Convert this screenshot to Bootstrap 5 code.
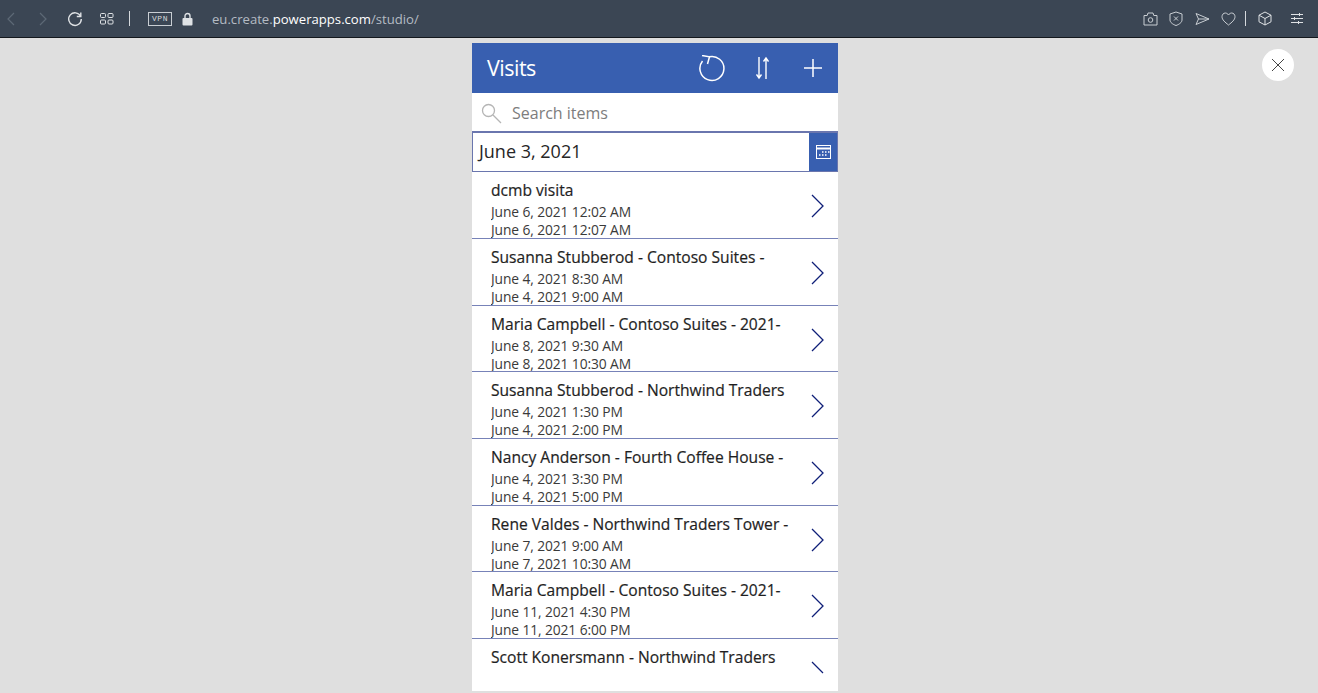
<!DOCTYPE html>
<html lang="en">
<head>
  <meta charset="UTF-8">
  <title>Visits</title>
  <link href="https://cdn.jsdelivr.net/npm/bootstrap@5.3.0/dist/css/bootstrap.min.css" rel="stylesheet">
  <style>
    html, body { height: 693px; overflow: hidden; }
    body { background: #dfdfdf; font-family: "Open Sans", sans-serif; color: #1c1c1c; }
    svg { display: block; flex: none; }
    .browser-bar { height: 38px; background: #3b4654; border-bottom: 1px solid #14181d; padding: 0 14px 0 5px; }
    .bar-sep { width: 1px; height: 15px; background: #d5d9dd; }
    .vpn-tag { width: 24px; height: 14px; border: 1px solid #c9ced3; font: 8px/12px "Liberation Mono", monospace; letter-spacing: 0.6px; color: #d5d9dd; text-align: center; }
    .url-text { font: 13.13px "Open Sans", sans-serif; color: #b4bbc3; margin-left: 19px; }
    .url-text b { color: #fff; font-weight: 400; }
    .stage { position: relative; height: 655px; padding: 5px 8px 0 0; }
    .close-btn { position: absolute; top: 11px; right: 24px; width: 32px; height: 32px; border-radius: 50%; background: #fff; }
    .phone { width: 366px; height: 648px; background: #fff; overflow: hidden; }
    .app-head { height: 50px; background: #385fb0; color: #fff; padding: 0 15px 0 15px; }
    .app-title { font-size: 21.5px; letter-spacing: -0.5px; }
    .search-row { height: 38px; padding: 2px 0 0 9px; font-size: 16px; color: #7d7d7d; gap: 10px; }
    .date-row { height: 41.4px; border: 1px solid #6a76ae; border-top-width: 2px; }
    .date-text { font-size: 18px; padding: 0 0 2px 6px; color: #262626; }
    .date-btn { width: 28px; background: #385fb0; }
    .app-head, .search-row, .date-row, .visit-row { flex-shrink: 0; }
    .visit-row { height: 66.67px; border-bottom: 1px solid #7782b8; padding: 8px 13px 0 19px; overflow: hidden; }
    .visit-row:last-child { border-bottom: 0; }
    .visit-body { width: 304px; overflow: hidden; white-space: nowrap; }
    .visit-title { font-size: 15.6px; font-weight: 500; line-height: 20px; margin-bottom: 3px; color: #1f1f1f; -webkit-text-stroke: 0.2px #1f1f1f; }
    .visit-time { font-size: 13.8px; line-height: 18px; color: #3a3a3a; letter-spacing: -0.1px; }
    .chev-box { margin-top: 14px; }
  </style>
</head>
<body>

  <div class="browser-bar d-flex align-items-center">
    <svg width="12" height="14" viewBox="0 0 12 14" fill="none" stroke="#5d6976" stroke-width="1.2"><path d="M9 1 3 7l6 6"/></svg>
    <svg style="margin-left:20px" width="12" height="14" viewBox="0 0 12 14" fill="none" stroke="#5d6976" stroke-width="1.2"><path d="m3 1 6 6-6 6"/></svg>
    <svg style="margin-left:18px" width="16" height="16" viewBox="0 0 16 16" fill="none" stroke="#dfe2e5" stroke-width="1.4"><path d="M13.6 5.2A6.3 6.3 0 1 0 14.3 8"/><path d="M13.800 1.500v4h-4"/></svg>
    <svg style="margin-left:17px" width="14" height="12" viewBox="0 0 14 12" fill="none" stroke="#dfe2e5"><rect x=".5" y=".5" width="5" height="4" rx="1"/><rect x="8" y=".5" width="5" height="4" rx="1"/><rect x=".5" y="7" width="5" height="4" rx="1"/><rect x="8" y="7" width="5" height="4" rx="1"/></svg>
    <div class="bar-sep" style="margin-left:15px"></div>
    <div class="vpn-tag" style="margin-left:18px">VPN</div>
    <svg style="margin-left:10px" width="11" height="14" viewBox="0 0 11 14"><path d="M3 6V4a2.500 2.500 0 0 1 5 0v2" fill="none" stroke="#dfe2e5" stroke-width="1.4"/><rect x=".5" y="6" width="10" height="7.500" rx="1" fill="#dfe2e5"/></svg>
    <div class="url-text">eu.create.<b>powerapps.com</b>/studio/</div>

    <div class="d-flex align-items-center ms-auto">
      <svg width="15" height="14" viewBox="0 0 15 14" fill="none" stroke="#c9ced3"><path d="M1 3.500h3.200L5 1h5l.8 2.500H14v9.500H1z"/><circle cx="7.500" cy="8" r="2.300"/></svg>
      <svg style="margin-left:11px" width="14" height="15" viewBox="0 0 14 15" fill="none" stroke="#c9ced3"><path d="M7 1 13 3v6c0 2.500-3 4.500-6 5.500C4 13.500 1 11.500 1 9V3z"/><path d="m5 5.500 4 4m0-4-4 4"/></svg>
      <svg style="margin-left:12px" width="15" height="14" viewBox="0 0 15 14" fill="none" stroke="#c9ced3"><path d="M1 1.500 14 7 1 12.500 3.500 7zM3.500 7H14"/></svg>
      <svg style="margin-left:11px" width="15" height="14" viewBox="0 0 15 14" fill="none" stroke="#c9ced3"><path d="M7.500 13C4 10.200 1 7.800 1 4.700 1 2.600 2.500 1 4.300 1c1.300 0 2.500.8 3.200 2 .7-1.200 1.900-2 3.200-2C12.500 1 14 2.600 14 4.700c0 3.100-3 5.500-6.500 8.300z"/></svg>
      <div class="bar-sep" style="margin-left:9px"></div>
      <svg style="margin-left:12px" width="14" height="15" viewBox="0 0 14 15" fill="none" stroke="#dfe2e5"><path d="M7 1 13 4.200v6.600L7 14 1 10.800V4.200zM1 4.200 7 7.500l6-3.300M7 7.500V14"/></svg>
      <svg style="margin-left:18px" width="14" height="13" viewBox="0 0 14 13" fill="none" stroke="#dfe2e5"><path d="M1 2.500h12M1 6.500h12M1 10.500h12"/><path d="M9.500 1v3M4.500 5v3M8.500 9v3"/></svg>
    </div>
  </div>

  <div class="stage d-flex justify-content-center">
    <div class="close-btn d-flex align-items-center justify-content-center">
      <svg width="14" height="14" viewBox="0 0 14 14" fill="none" stroke="#444" stroke-width="1"><path d="m1 1 12 12M13 1 1 13"/></svg>
    </div>

    <div class="phone d-flex flex-column">
      <div class="app-head d-flex align-items-center">
        <div class="app-title me-auto">Visits</div>
        <svg width="26" height="27" viewBox="0 0 26 27" fill="none" stroke="#fff" stroke-width="1.5"><path d="M10 1.800A12 12 0 1 1 3.500 6"/><path d="M3 .5 10.500 1.800 8.500 9"/></svg>
        <svg style="margin-left:31px" width="13" height="24" viewBox="0 0 13 24" fill="none" stroke="#fff" stroke-width="1.400"><path d="M3 1v21M.5 18.500 3 22l2.500-3.500"/><path d="M10 23V2M7.500 5.500 10 2l2.500 3.500"/></svg>
        <svg style="margin-left:34px" width="20" height="20" viewBox="0 0 20 20" fill="none" stroke="#fff" stroke-width="1.500"><path d="M10 1v18M1 10h18"/></svg>
      </div>

      <div class="search-row d-flex align-items-center">
        <svg width="21" height="21" viewBox="0 0 21 21" fill="none" stroke="#b5b5b5" stroke-width="1.300"><circle cx="7.500" cy="7.500" r="6"/><path d="m12 12 8 8"/></svg>
        <span>Search items</span>
      </div>

      <div class="date-row d-flex">
        <div class="date-text flex-grow-1 d-flex align-items-center">June 3, 2021</div>
        <div class="date-btn d-flex align-items-center justify-content-center">
          <svg width="15" height="14" viewBox="0 0 15 14" fill="none" stroke="#fff"><rect x=".5" y=".5" width="14" height="13"/><path d="M.5 3.500h14" stroke-width="2"/><path d="M6 7h1.500M9 7h1.500M12 7h1.500M3 10h1.500M6 10h1.500M9 10h1.500" stroke-width="1.400"/></svg>
        </div>
      </div>

      <div id="lista-visitas"></div>
    </div>
  </div>

  <script>
    const visitas = [
      ["dcmb visita", "June 6, 2021 12:02 AM", "June 6, 2021 12:07 AM"],
      ["Susanna Stubberod - Contoso Suites -", "June 4, 2021 8:30 AM", "June 4, 2021 9:00 AM"],
      ["Maria Campbell - Contoso Suites - 2021-", "June 8, 2021 9:30 AM", "June 8, 2021 10:30 AM"],
      ["Susanna Stubberod - Northwind Traders", "June 4, 2021 1:30 PM", "June 4, 2021 2:00 PM"],
      ["Nancy Anderson - Fourth Coffee House -", "June 4, 2021 3:30 PM", "June 4, 2021 5:00 PM"],
      ["Rene Valdes - Northwind Traders Tower -", "June 7, 2021 9:00 AM", "June 7, 2021 10:30 AM"],
      ["Maria Campbell - Contoso Suites - 2021-", "June 11, 2021 4:30 PM", "June 11, 2021 6:00 PM"],
      ["Scott Konersmann - Northwind Traders", "", ""]
    ];

    const lista = document.getElementById("lista-visitas");

    visitas.forEach((v, i) => {
      const ultimo = i === visitas.length - 1;
      const seta = ultimo ? "M1 1 12 12" : "M1 1 12 12 1 23";
      const linha = document.createElement("div");
      linha.className = "visit-row d-flex justify-content-between";
      linha.innerHTML = `
        <div class="visit-body">
          <div class="visit-title">${v[0]}</div>
          <div class="visit-time">${v[1]}</div>
          <div class="visit-time">${v[2]}</div>
        </div>
        <svg class="chev-box" width="14" height="24" viewBox="0 0 14 24" fill="none" stroke="#0f1f78" stroke-width="1.300"><path d="${seta}"/></svg>
      `;
      lista.appendChild(linha);
    });
  </script>
  <script src="https://cdn.jsdelivr.net/npm/bootstrap@5.3.0/dist/js/bootstrap.bundle.min.js"></script>
</body>
</html>
